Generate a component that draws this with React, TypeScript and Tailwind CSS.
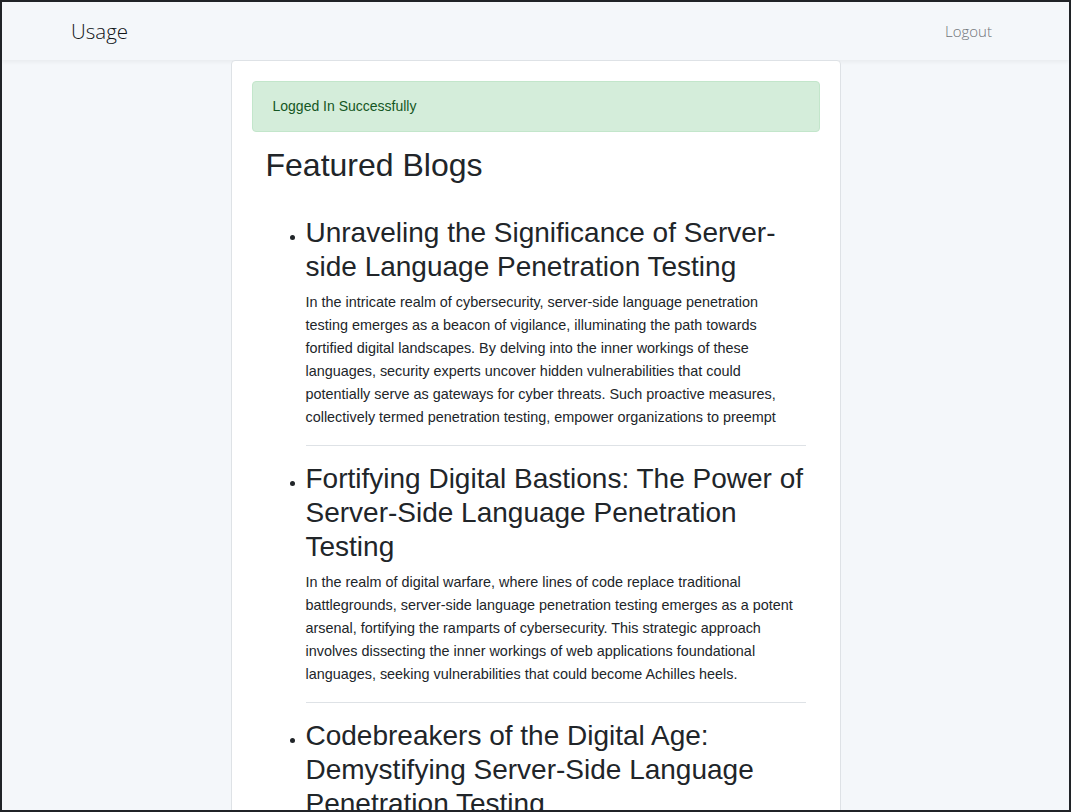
import React from 'react';

interface Blog {
    title: string;
    summary: string;
}

const blogs: Blog[] = [
    {
        title: 'Unraveling the Significance of Server-side Language Penetration Testing',
        summary:
            'In the intricate realm of cybersecurity, server-side language penetration testing emerges as a beacon of vigilance, illuminating the path towards fortified digital landscapes. By delving into the inner workings of these languages, security experts uncover hidden vulnerabilities that could potentially serve as gateways for cyber threats. Such proactive measures, collectively termed penetration testing, empower organizations to preempt',
    },
    {
        title: 'Fortifying Digital Bastions: The Power of Server-Side Language Penetration Testing',
        summary:
            'In the realm of digital warfare, where lines of code replace traditional battlegrounds, server-side language penetration testing emerges as a potent arsenal, fortifying the ramparts of cybersecurity. This strategic approach involves dissecting the inner workings of web applications foundational languages, seeking vulnerabilities that could become Achilles heels.',
    },
    {
        title: 'Codebreakers of the Digital Age: Demystifying Server-Side Language Penetration Testing',
        summary:
            'In the ever-evolving landscape of cybersecurity, server-side language penetration testing stands as a crucial line of defense, revealing weaknesses before malicious actors can exploit them.',
    },
];

export default function App() {
    return (
        <div className="h-[812px] overflow-hidden border-2 border-[#202327] bg-[#f4f7fa] font-['Liberation_Sans',Arial,sans-serif] text-[#212529]">
            {/* Navbar */}
            <nav className="h-[58px] flex items-center justify-between pl-[69px] pr-[77px] shadow-[0_2px_4px_rgba(0,0,0,0.05)]">
                <span className="font-['Open_Sans',sans-serif] font-light text-[20.5px] text-[#111417]">Usage</span>
                <span className="font-['Open_Sans',sans-serif] font-light text-[15px] text-[#6f7378]">Logout</span>
            </nav>

            {/* Card */}
            <div className="w-[610px] mx-auto bg-white border border-[#dee2e6] rounded p-5">
                <div className="px-5 py-4 mb-[14px] rounded border border-[#c3e6cb] bg-[#d4edda] text-[#155724] text-sm leading-[17px]">
                    Logged In Successfully
                </div>

                <div className="px-[14px]">
                    <h2 className="text-[32px] leading-[38px]">Featured Blogs</h2>

                    <ul className="list-disc pl-10 mt-8">
                        {blogs.map((blog, idx) => (
                            <li key={idx} className="text-base">
                                <h3 className="text-[28px] leading-[34px]">{blog.title}</h3>
                                <p className="text-[14.4px] leading-[23px] mt-[6.5px] mr-[7px]">{blog.summary}</p>
                                <hr className="mt-[16.5px] mb-4 border-0 border-t border-[#dee2e6]" />
                            </li>
                        ))}
                    </ul>
                </div>
            </div>
        </div>
    );
}
